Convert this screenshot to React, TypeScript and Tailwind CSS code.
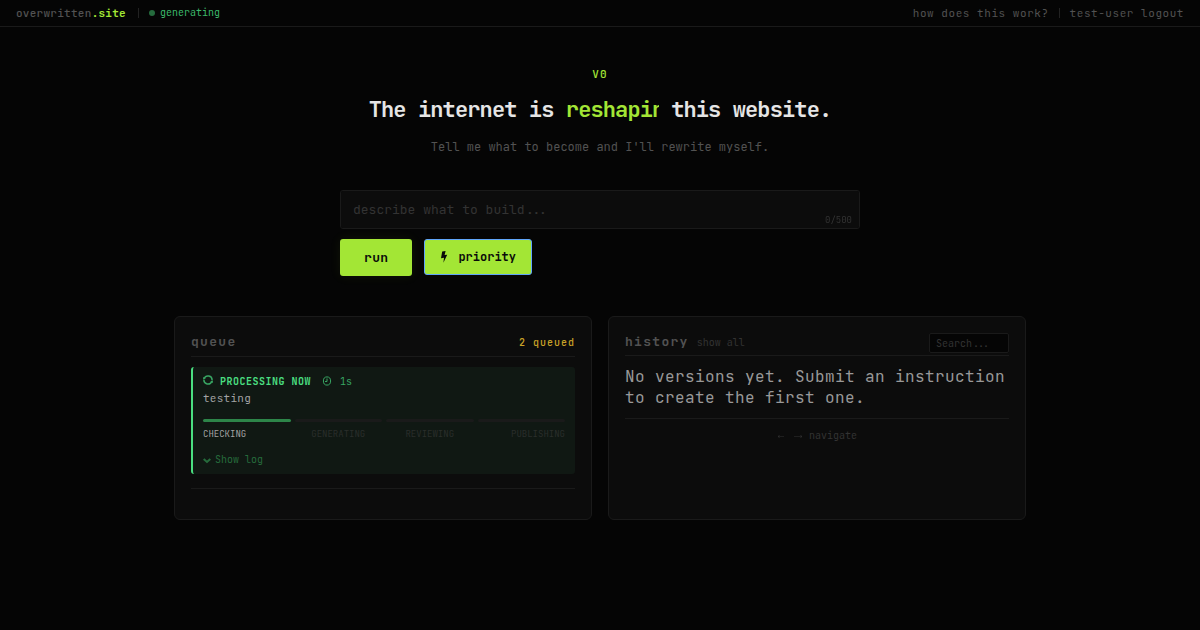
import * as React from "react";

const STEPS = [
  { label: "CHECKING", bar: "bg-[#2d8549]", text: "text-left text-[#a3a3a3]" },
  { label: "GENERATING", bar: "bg-[#1a1a1a]", text: "text-center text-[#2a2e2b]" },
  { label: "REVIEWING", bar: "bg-[#1a1a1a]", text: "text-center text-[#2a2e2b]" },
  { label: "PUBLISHING", bar: "bg-[#1a1a1a]", text: "text-right text-[#2a2e2b]" },
];
const MAX_LENGTH = 500;

const Navbar: React.FunctionComponent = () => {
  return (
    <header className="flex h-[27px] items-center justify-between border-b border-[#1a1a1a] px-4 text-[11px] text-[#525252]">
      <div className="flex items-center">
        <a href="#" className="font-medium tracking-wide">
          overwritten<span className="font-bold text-[#a3e635]">.site</span>
        </a>
        <span className="ml-3 h-2.5 w-px bg-[#222222]" />
        <span className="ml-2.5 size-1.5 rounded-full bg-[#256b3d]" />
        <span className="ml-[5px] pb-0.5 text-[10px] text-[#3cb96b]">generating</span>
      </div>
      <nav className="flex items-center tracking-wider">
        <a href="#">how does this work?</a>
        <span className="mx-2.5 h-2.5 w-px bg-[#222222]" />
        <a href="#">test-user logout</a>
      </nav>
    </header>
  );
};

const Hero: React.FunctionComponent = () => {
  return (
    <section className="text-center">
      <p className="text-[11px] leading-4 font-medium tracking-widest text-[#a3e635]">V0</p>
      <h1 className="mt-3 flex justify-center text-[22px] leading-8 font-bold tracking-[-0.04em] whitespace-pre text-[#e5e5e5]">
        <span>The internet is </span>
        <span className="w-[93px] overflow-hidden text-left text-[#a3e635]">reshapin</span>
        <span> this website.</span>
      </h1>
      <p className="mt-[11px] text-[12px] leading-5 text-[#525252]">
        Tell me what to become and I'll rewrite myself.
      </p>
    </section>
  );
};

const PromptForm: React.FunctionComponent = () => {
  const [prompt, setPrompt] = React.useState<string>("");

  return (
    <form className="mx-auto mt-[33px] max-w-[520px]" onSubmit={(e) => e.preventDefault()}>
      <div className="relative">
        <textarea
          aria-label="Describe what to build"
          rows={1}
          maxLength={MAX_LENGTH}
          value={prompt}
          onChange={(e) => setPrompt(e.target.value)}
          placeholder="describe what to build..."
          className="block h-[39px] w-full resize-none rounded-[3px] border border-[#1a1a1a] bg-[#0c0c0c] px-3 py-[9px] text-[13px] leading-5 text-[#e5e5e5] outline-none placeholder:text-[#333333]"
        />
        <span className="absolute right-2 bottom-[3px] text-[9px] leading-3 text-[#333333]">
          {prompt.length}/{MAX_LENGTH}
        </span>
      </div>
      <div className="mt-2.5 flex items-start gap-3 text-[#0a0a0a]">
        <button
          type="submit"
          className="h-[37px] rounded-[3px] bg-[#a3e635] px-6 text-[13px] font-bold tracking-wide shadow-[0_0_12px_rgba(163,230,53,0.08)]"
        >
          run
        </button>
        <button
          type="button"
          className="flex h-9 items-center rounded-[3px] border border-[#60a5fa] bg-[#a3e635] px-[15px] text-[12px] font-bold"
        >
          <svg viewBox="0 0 8 12" className="mr-2.5 h-3 w-2" fill="currentColor">
            <path d="M2.2 0.5L5.6 0L4.6 4L7.2 3.8L3.4 11.8L4 6.8L1 7.2Z" />
          </svg>
          priority
        </button>
      </div>
    </form>
  );
};

const QueuePanel: React.FunctionComponent = () => {
  return (
    <section className="min-h-[204px] rounded-md border border-[#1a1a1a] bg-[#0c0c0c] p-4">
      <div className="flex h-6 items-start justify-between border-b border-[#1a1a1a]">
        <h2 className="text-[13px] leading-[18px] font-semibold tracking-widest text-[#525252]">queue</h2>
        <span className="text-[10px] leading-5 font-medium tracking-widest text-[#c9a227]">2 queued</span>
      </div>
      <div className="mt-2.5 rounded-[3px] border-l-2 border-[#4ade80] bg-[#101813] px-2.5 py-1.5">
        <div className="flex h-4 items-center text-[10px] text-[#38a563]">
          <svg viewBox="0 0 10 10" className="mr-[7px] mb-0.5 size-2.5" fill="none" stroke="currentColor">
            <path strokeWidth="1.5" d="M0.9 4.8A4.1 4.1 0 0 0 8.8 6.5M9.1 5.2A4.1 4.1 0 0 0 1.2 3.5" />
            <path fill="currentColor" stroke="none" d="M0 2L2.8 3.8L0.2 4.6ZM10 8L7.2 6.2L9.8 5.4Z" />
          </svg>
          <span className="font-bold tracking-wider text-[#4ade80]">PROCESSING NOW</span>
          <svg viewBox="0 0 10 10" className="ml-[11px] size-2.5" fill="none" stroke="currentColor">
            <ellipse cx="5" cy="5" rx="3.6" ry="4.1" />
            <path d="M5 2.5V5.5H3" />
          </svg>
          <span className="ml-2">1s</span>
        </div>
        <p className="text-[11px] leading-[18px] tracking-wide text-[#a3a3a3]">testing</p>
        <div className="mt-3 grid grid-cols-4 gap-1">
          {STEPS.map((step) => (
            <span key={step.label} className={`h-[3px] rounded-sm ${step.bar}`} />
          ))}
        </div>
        <div className="mt-1.5 grid grid-cols-4 gap-1 text-[9px] leading-3">
          {STEPS.map((step) => (
            <span key={step.label} className={step.text}>
              {step.label}
            </span>
          ))}
        </div>
        <button type="button" className="mt-3 flex items-center text-[10px] leading-4 text-[#266b3c]">
          <svg viewBox="0 0 8 8" className="mr-1 size-2" fill="none" stroke="currentColor" strokeWidth="2">
            <path d="M0.7 3L4 6L7.3 3" />
          </svg>
          Show log
        </button>
      </div>
      <hr className="mt-3.5 border-[#1a1a1a]" />
    </section>
  );
};

const HistoryPanel: React.FunctionComponent = () => {
  const [search, setSearch] = React.useState<string>("");

  return (
    <section className="min-h-[204px] rounded-md border border-[#1a1a1a] bg-[#0c0c0c] p-4">
      <div className="flex h-[23px] items-start border-b border-[#1a1a1a]">
        <h2 className="text-[13px] leading-[18px] font-semibold tracking-widest text-[#525252]">history</h2>
        <button type="button" className="ml-2 text-[10px] leading-5 text-[#333333]">
          show all
        </button>
        <input
          type="text"
          aria-label="Search history"
          value={search}
          onChange={(e) => setSearch(e.target.value)}
          placeholder="Search..."
          className="ml-auto h-5 w-20 rounded-xs border border-[#1a1a1a] bg-[#050505] px-1.5 text-[10px] text-[#a3a3a3] outline-none placeholder:text-[#333333]"
        />
      </div>
      <p className="mt-2.5 text-[16px] leading-[21px] tracking-wide text-[#999999]">
        No versions yet. Submit an instruction to create the first one.
      </p>
      <div className="mt-2.5 flex items-center justify-center border-t border-[#1a1a1a] pt-2 text-[10px] leading-[18px] text-[#333333]">
        <svg viewBox="0 0 26 6" className="mr-1.5 h-1.5 w-[26px]" fill="none" stroke="currentColor">
          <path strokeWidth="0.5" d="M1 3.5H7M17 3.5H25" />
          <path strokeWidth="0.8" d="M2.5 2.5L1 3.5L2.5 4.5M23.5 2.5L25 3.5L23.5 4.5" />
        </svg>
        navigate
      </div>
    </section>
  );
};

export default function App() {
  return (
    <div className="min-h-screen bg-[#050505] font-['JetBrains_Mono','DejaVu_Sans_Mono',monospace]">
      <Navbar />
      <main className="mx-auto max-w-[884px] px-4 pt-[39px] pb-10">
        <Hero />
        <PromptForm />
        <div className="mt-10 grid gap-4 sm:grid-cols-2">
          <QueuePanel />
          <HistoryPanel />
        </div>
      </main>
    </div>
  );
}
